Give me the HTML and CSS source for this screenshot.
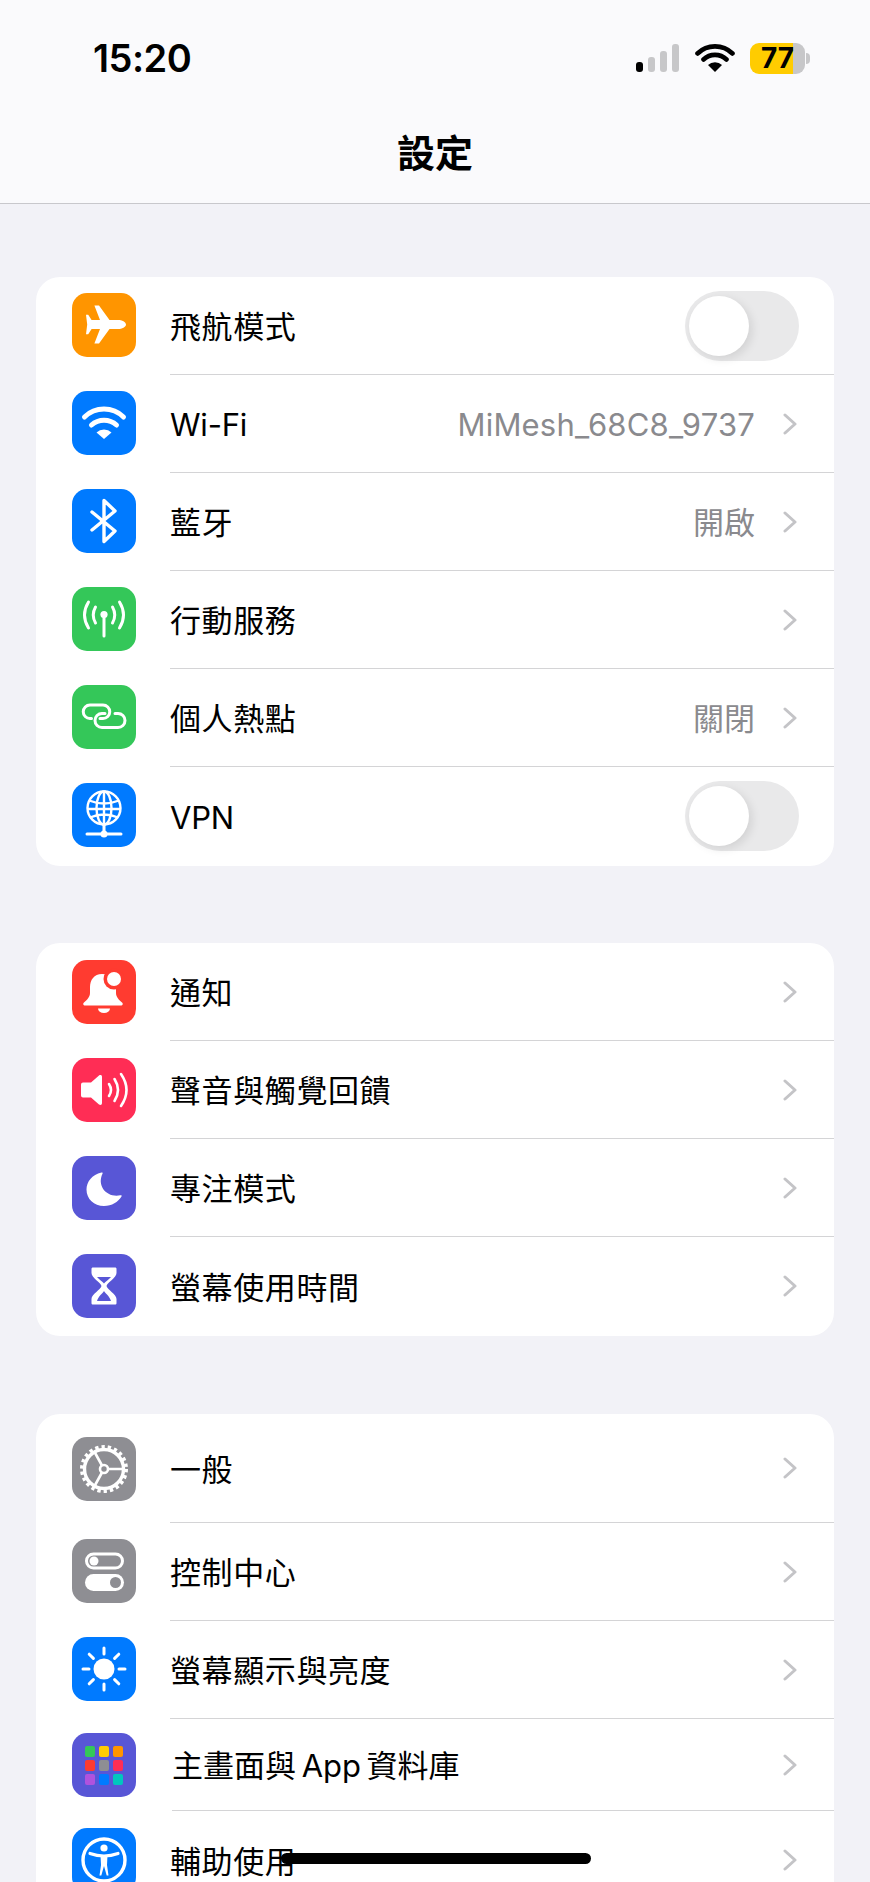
FILE: index.html
```html
<!DOCTYPE html>
<html lang="zh-Hant">
<head>
  <meta charset="UTF-8" />
  <meta name="viewport" content="width=device-width, initial-scale=1.0" />
  <title>設定</title>
  <link rel="stylesheet" href="styles.css">
</head>
<body>
  <header class="nav">
    <div class="status">
      <span class="time">15:20</span>
      <div class="status-icons">
        <div class="signal">
          <span class="bar bar-1 on"></span>
          <span class="bar bar-2"></span>
          <span class="bar bar-3"></span>
          <span class="bar bar-4"></span>
        </div>
        <svg class="status-wifi" viewBox="0 0 40 30">
          <path d="M2.500 10.500a25 25 0 0 1 35 0M8.500 16.500a16.500 16.500 0 0 1 23 0" fill="none" stroke="#000" stroke-width="4.600" stroke-linecap="round"/>
          <path d="M20 29l-7-7a10 10 0 0 1 14 0z" fill="#000"/>
        </svg>
        <div class="battery"><span class="battery-level">77</span></div>
        <span class="battery-cap"></span>
      </div>
    </div>
    <h1>設定</h1>
  </header>

  <main class="content">
    <section class="group">
      <div class="row row-lift">
        <div class="icon orange">
          <svg viewBox="0 0 64 64"><path d="M54 31.500c0-2.500-4-4.600-8-4.600h-8.500L27 12.500h-4.600l5.600 14.400h-8.400l-3.400-5.200H14l1.200 9.800L14 41.300h2.200l3.400-5.200h8.400l-5.600 14.400H27l10.500-14.400H46c4 0 8-2.100 8-4.600z" fill="#fff"/></svg>
        </div>
        <div class="row-body">
          <span class="label">飛航模式</span>
          <span class="switch"><span class="knob"></span></span>
        </div>
      </div>
      <div class="row row-lift">
        <div class="icon blue">
          <svg viewBox="0 0 64 64">
            <path d="M12.500 26a28 28 0 0 1 39 0M19.500 34a18.500 18.500 0 0 1 25 0" fill="none" stroke="#fff" stroke-width="5" stroke-linecap="round"/>
            <path d="M32 48l-7.500-6.500a11 11 0 0 1 15 0z" fill="#fff"/>
          </svg>
        </div>
        <div class="row-body">
          <span class="label latin">Wi-Fi</span>
          <span class="value latin">MiMesh_68C8_9737</span>
          <svg class="chevron" viewBox="0 0 14 22"><path d="M2 2l10 9-10 9"/></svg>
        </div>
      </div>
      <div class="row row-lift">
        <div class="icon blue">
          <svg viewBox="0 0 64 64"><path d="M20 23l23 19-11 10.500v-41L43 22 20 41" fill="none" stroke="#fff" stroke-width="3.400" stroke-linecap="round" stroke-linejoin="round"/></svg>
        </div>
        <div class="row-body">
          <span class="label">藍牙</span>
          <span class="value">開啟</span>
          <svg class="chevron" viewBox="0 0 14 22"><path d="M2 2l10 9-10 9"/></svg>
        </div>
      </div>
      <div class="row row-lift">
        <div class="icon green">
          <svg viewBox="0 0 64 64">
            <path d="M16.500 15Q8.500 28 16.500 41M47.500 15Q55.500 28 47.500 41M23.500 20Q19 28 23.500 36M40.500 20Q45 28 40.500 36" fill="none" stroke="#fff" stroke-width="3" stroke-linecap="round"/>
            <path d="M32 28v21" stroke="#fff" stroke-width="3" stroke-linecap="round"/>
            <circle cx="32" cy="27.500" r="3.600" fill="#fff"/>
          </svg>
        </div>
        <div class="row-body">
          <span class="label">行動服務</span>
          <svg class="chevron" viewBox="0 0 14 22"><path d="M2 2l10 9-10 9"/></svg>
        </div>
      </div>
      <div class="row row-lift">
        <div class="icon green">
          <svg viewBox="0 0 64 64"><path d="M19.500 33.500H18a6.750 6.750 0 0 1 0-13.500h13a6.750 6.750 0 0 1 0 13.500h-3M43 28.500h3a7 7 0 0 1 0 14H30a7 7 0 0 1 0-14h3" fill="none" stroke="#fff" stroke-width="3" stroke-linecap="round"/></svg>
        </div>
        <div class="row-body">
          <span class="label">個人熱點</span>
          <span class="value">關閉</span>
          <svg class="chevron" viewBox="0 0 14 22"><path d="M2 2l10 9-10 9"/></svg>
        </div>
      </div>
      <div class="row row-end row-lift">
        <div class="icon blue">
          <svg viewBox="0 0 64 64">
            <g fill="none" stroke="#fff" stroke-width="2.400">
              <circle cx="32" cy="25" r="16.500"/>
              <ellipse cx="32" cy="25" rx="7.500" ry="16.500"/>
              <path d="M32 8.500v33M17 17.500q15 6 30 0M15.500 26h33M18 34.500q14-6 28 0"/>
            </g>
            <path d="M32 41v9M15 51h34" stroke="#fff" stroke-width="3" stroke-linecap="round"/>
            <circle cx="32" cy="51" r="3.500" fill="#fff"/>
          </svg>
        </div>
        <div class="row-body">
          <span class="label latin">VPN</span>
          <span class="switch"><span class="knob"></span></span>
        </div>
      </div>
    </section>

    <section class="group">
      <div class="row">
        <div class="icon red">
          <svg viewBox="0 0 64 64">
            <path d="M30 14c-8 0-12 6-12 13v6c0 4-3 7-6 9.500-1.500 1.500-.5 3 1 3h36c1.500 0 2.500-1.500 1-3-3-2.500-6-5.500-6-9.500v-6c0-7-4-13-14-13z" fill="#fff"/>
            <path d="M26 48.500h12a6 4.500 0 0 1-12 0z" fill="#fff"/>
            <circle cx="42" cy="19" r="10.500" fill="#ff3b30"/>
            <circle cx="42" cy="19" r="7" fill="#fff"/>
          </svg>
        </div>
        <div class="row-body">
          <span class="label">通知</span>
          <svg class="chevron" viewBox="0 0 14 22"><path d="M2 2l10 9-10 9"/></svg>
        </div>
      </div>
      <div class="row">
        <div class="icon pink">
          <svg viewBox="0 0 64 64">
            <path d="M30 19v26c0 2-1.500 2.500-3 1.500L19 39.500h-8q-2 0-2-2v-11q0-2 2-2h8l8-7c1.500-1 3-.5 3 1.500z" fill="#fff"/>
            <path d="M37 26Q41 32 37 38M42.500 21Q49.500 32 42.500 43M49 16Q60 32 49 48" fill="none" stroke="#fff" stroke-width="2.600" stroke-linecap="round"/>
          </svg>
        </div>
        <div class="row-body">
          <span class="label">聲音與觸覺回饋</span>
          <svg class="chevron" viewBox="0 0 14 22"><path d="M2 2l10 9-10 9"/></svg>
        </div>
      </div>
      <div class="row">
        <div class="icon indigo">
          <svg viewBox="0 0 64 64"><path d="M29.500 16.500C20 18.500 14.500 26 14.500 33.500 14.500 43 22 50 32 50c8 0 14-4 17.500-9.500.5-1-.2-1.500-1.200-1.200C35 42 24.500 30 30.500 17.700c.4-.9-.1-1.400-1-1.200z" fill="#fff"/></svg>
        </div>
        <div class="row-body">
          <span class="label">專注模式</span>
          <svg class="chevron" viewBox="0 0 14 22"><path d="M2 2l10 9-10 9"/></svg>
        </div>
      </div>
      <div class="row row-end">
        <div class="icon indigo">
          <svg viewBox="0 0 64 64">
            <path d="M21 13.500h22c1 0 1.500.5 1.500 1.500v4c0 5-9 9-10 13 1 4 10 8 10 13v4c0 1-.5 1.500-1.500 1.500H21c-1 0-1.500-.5-1.500-1.500v-4c0-5 9-9 10-13-1-4-10-8-10-13v-4c0-1 .5-1.500 1.500-1.500z" fill="#fff"/>
            <path d="M25 23h14c-2 2.500-5.500 4.500-7 6.500-1.500-2-5-4-7-6.500zM32 37c1.500 2.500 5.500 5 7 10H25c1.500-5 5.500-7.500 7-10z" fill="#5856d6"/>
          </svg>
        </div>
        <div class="row-body">
          <span class="label">螢幕使用時間</span>
          <svg class="chevron" viewBox="0 0 14 22"><path d="M2 2l10 9-10 9"/></svg>
        </div>
      </div>
    </section>

    <section class="group group-general">
      <div class="row row-tall">
        <div class="icon gray">
          <svg viewBox="0 0 64 64">
            <g fill="none" stroke="#fff">
              <circle cx="32" cy="32" r="19.500" stroke-width="3.400"/>
              <circle cx="32" cy="32" r="22" stroke-width="4" stroke-dasharray="3.300 2.980"/>
              <circle cx="32" cy="32" r="4" stroke-width="2.600"/>
              <path d="M36 32h16M30 28.500l-8-14.500M30 35.500l-8 14.500" stroke-width="2.600"/>
            </g>
          </svg>
        </div>
        <div class="row-body">
          <span class="label">一般</span>
          <svg class="chevron" viewBox="0 0 14 22"><path d="M2 2l10 9-10 9"/></svg>
        </div>
      </div>
      <div class="row row-lift">
        <div class="icon gray">
          <svg viewBox="0 0 64 64">
            <rect x="14.500" y="15" width="36" height="14" rx="7" fill="none" stroke="#fff" stroke-width="3"/>
            <circle cx="22" cy="22" r="4.500" fill="#fff"/>
            <rect x="13" y="35" width="39" height="17" rx="8.500" fill="#fff"/>
            <circle cx="43.500" cy="43.500" r="5.500" fill="#8e8e93"/>
          </svg>
        </div>
        <div class="row-body">
          <span class="label">控制中心</span>
          <svg class="chevron" viewBox="0 0 14 22"><path d="M2 2l10 9-10 9"/></svg>
        </div>
      </div>
      <div class="row row-lift">
        <div class="icon blue">
          <svg viewBox="0 0 64 64">
            <circle cx="32" cy="32" r="10.500" fill="#fff"/>
            <path d="M32 11v6M32 47v6M11 32h6M47 32h6M17.200 17.200l4.200 4.200M42.600 42.600l4.200 4.200M17.200 46.800l4.200-4.200M42.600 21.400l4.200-4.200" stroke="#fff" stroke-width="3" stroke-linecap="round"/>
          </svg>
        </div>
        <div class="row-body">
          <span class="label">螢幕顯示與亮度</span>
          <svg class="chevron" viewBox="0 0 14 22"><path d="M2 2l10 9-10 9"/></svg>
        </div>
      </div>
      <div class="row row-short row-home">
        <div class="icon indigo">
          <svg viewBox="0 0 64 64">
            <rect x="13" y="13" width="10" height="11" rx="2" fill="#34c759"/>
            <rect x="27" y="13" width="10" height="11" rx="2" fill="#ffcc00"/>
            <rect x="41" y="13" width="10" height="11" rx="2" fill="#ff9500"/>
            <rect x="13" y="27" width="10" height="11" rx="2" fill="#ff3b30"/>
            <rect x="27" y="27" width="10" height="11" rx="2" fill="#8e8e93"/>
            <rect x="41" y="27" width="10" height="11" rx="2" fill="#ff2d55"/>
            <rect x="13" y="41" width="10" height="11" rx="2" fill="#af52de"/>
            <rect x="27" y="41" width="10" height="11" rx="2" fill="#007aff"/>
            <rect x="41" y="41" width="10" height="11" rx="2" fill="#00c7be"/>
          </svg>
        </div>
        <div class="row-body">
          <span class="label">主畫面與&thinsp;App&thinsp;資料庫</span>
          <svg class="chevron" viewBox="0 0 14 22"><path d="M2 2l10 9-10 9"/></svg>
        </div>
      </div>
      <div class="row row-end">
        <div class="icon blue">
          <svg viewBox="0 0 64 64">
            <circle cx="32" cy="32" r="21" fill="none" stroke="#fff" stroke-width="3.400"/>
            <circle cx="32" cy="20" r="3.600" fill="#fff"/>
            <path d="M18 25.500q7 2.500 14 2.500t14-2.500" fill="none" stroke="#fff" stroke-width="3.200" stroke-linecap="round"/>
            <path d="M28.500 27h7l-.5 10 1.500 10.500h-1.800L32 38l-2.700 9.500h-1.800L29 37z" fill="#fff"/>
          </svg>
        </div>
        <div class="row-body">
          <span class="label">輔助使用</span>
          <svg class="chevron" viewBox="0 0 14 22"><path d="M2 2l10 9-10 9"/></svg>
        </div>
      </div>
    </section>
  </main>

  <div class="home-bar"></div>
</body>
</html>
```

FILE: styles.css
```css
html, body {
  height: 1882px;
  overflow: hidden;
}
body {
  position: relative;
  margin: 0;
  background: #f2f2f7;
  color: #000;
  font-family: Inter, "Noto Sans CJK TC", sans-serif;
}

/* top bar */
.nav {
  box-sizing: border-box;
  height: 204px;
  padding-top: 38px;
  background: #fafafc;
  border-bottom: 1px solid #c8c8cc;
}
.status {
  display: flex;
  justify-content: space-between;
  align-items: center;
  height: 40px;
  padding: 0 60px 0 93px;
}
.time {
  font-size: 38px;
  font-weight: 600;
  letter-spacing: -0.5px;
}
.status-icons {
  display: flex;
  align-items: center;
}
.signal {
  display: flex;
  align-items: flex-end;
  gap: 5px;
  height: 28px;
  margin-right: 16px;
}
.bar {
  width: 7px;
  background: #c7c7c9;
  border-radius: 3px;
}
.bar.on { background: #000; }
.bar-1 { height: 10px; }
.bar-2 { height: 15px; }
.bar-3 { height: 21px; }
.bar-4 { height: 28px; }
.status-wifi {
  width: 40px;
  height: 30px;
  margin-right: 15px;
}
.battery {
  box-sizing: border-box;
  width: 55px;
  height: 31px;
  padding-left: 11px;
  border-radius: 9px;
  background: linear-gradient(to right, #ffcc00 78%, #c7c7c9 78%);
  font-size: 28px;
  font-weight: 700;
  line-height: 31px;
}
.battery-cap {
  width: 4px;
  height: 11px;
  margin-left: 1px;
  background: #c7c7c9;
  border-radius: 0 4px 4px 0;
}
.nav h1 {
  margin: 0;
  padding-top: 50px;
  text-align: center;
  font-size: 38px;
  font-weight: 700;
  line-height: 50px;
}

/* settings list */
.content {
  padding: 73px 36px 0;
}
.group {
  padding-bottom: 1px;
  background: #fff;
  border-radius: 24px;
  margin-bottom: 77px;
}
.group-general {
  margin-top: 78px;
}
.row {
  display: flex;
  align-items: center;
  height: 98px;
  padding-left: 36px;
}
.row-tall { height: 109px; }
.row-short { height: 92px; }
.icon {
  flex: none;
  width: 64px;
  height: 64px;
  border-radius: 15px;
}
.row-lift .icon { margin-bottom: 2px; }
.icon svg {
  display: block;
  width: 64px;
  height: 64px;
}
.orange { background: #ff9500; }
.blue { background: #007aff; }
.green { background: #34c759; }
.red { background: #ff3b30; }
.pink { background: #ff2d55; }
.indigo { background: #5856d6; }
.gray { background: #8e8e93; }

.row-body {
  display: flex;
  align-items: center;
  flex: 1;
  align-self: stretch;
  box-sizing: border-box;
  margin-left: 34px;
  padding-right: 37px;
  border-bottom: 1px solid #d4d4d6;
}
.row-end .row-body { border-bottom: none; }
.row-home .row-body { margin-left: 36px; }
.label {
  flex: 1;
  margin-bottom: 2px;
  font-size: 31px;
  letter-spacing: 0.6px;
}
.row-home .label { letter-spacing: 0; }
.value {
  margin-right: 28px;
  margin-bottom: 2px;
  font-size: 31px;
  color: #8a8a8e;
}
.label.latin {
  margin: 2px 0 0;
  letter-spacing: -0.2px;
}
.value.latin {
  margin-top: 2px;
  margin-bottom: 0;
  letter-spacing: 0.2px;
}
.chevron {
  flex: none;
  width: 14px;
  height: 22px;
  fill: none;
  stroke: #c4c4c7;
  stroke-width: 3;
  stroke-linecap: round;
  stroke-linejoin: round;
}
.switch {
  display: block;
  box-sizing: border-box;
  width: 114px;
  height: 70px;
  margin-right: -2px;
  padding: 5px 4px;
  border-radius: 35px;
  background: #e9e9ea;
}
.knob {
  display: block;
  width: 60px;
  height: 60px;
  border-radius: 50%;
  background: #fff;
  box-shadow: 3px 3px 10px rgba(0, 0, 0, 0.1);
}

.home-bar {
  position: absolute;
  left: 281px;
  top: 1853px;
  width: 310px;
  height: 11px;
  border-radius: 6px;
  background: #000;
}
```
